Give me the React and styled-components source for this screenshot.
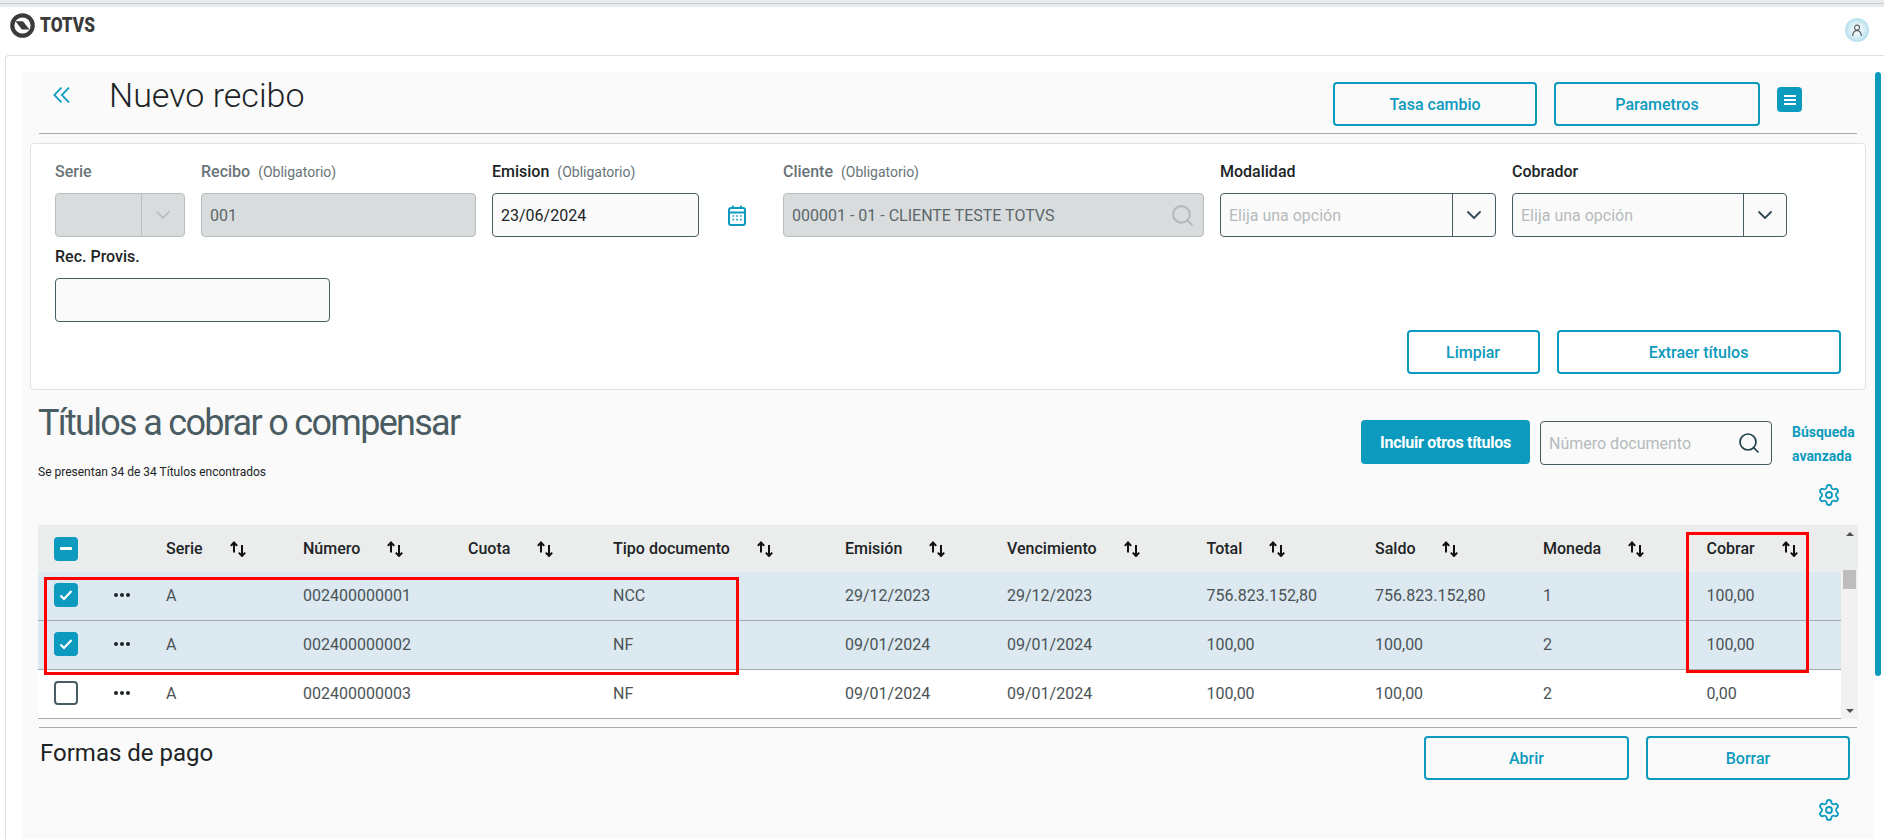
import React from 'react';
import styled, { createGlobalStyle, css } from 'styled-components';
import { ChevronDown, Search, Settings } from 'lucide-react';

const primary = '#0c9abe';
const columns = '76px 52px 137px 165px 145px 232px 162px 199.5px 168.5px 168px 163.5px 134px';

const GlobalStyle = createGlobalStyle`
  html, body {
    margin: 0;
    height: 100%;
    overflow: hidden;
    background: #fff;
  }

  body {
    font-family: Roboto, "Liberation Sans", sans-serif;
    font-size: 16px;
    color: #1d2426;
  }

  * {
    box-sizing: border-box;
  }
`;

const Page = styled.div`
  height: 839px;
  display: flex;
  flex-direction: column;
  overflow: hidden;
`;

const BrowserStrip = styled.div`
  height: 7px;
  flex: none;
  background: #e9ecee;
  padding-top: 3px;

  &::before {
    content: '';
    display: block;
    height: 1px;
    background: #c9ced2;
  }
`;

const TopBar = styled.header`
  height: 48px;
  flex: none;
  display: flex;
  align-items: center;
  justify-content: space-between;
  padding: 0 15px 2px 10px;
`;

const Logo = styled.div`
  display: flex;
  align-items: center;
  gap: 5px;
  margin-bottom: 9px;
  color: #3b3b3b;
`;

const LogoText = styled.span`
  display: inline-block;
  width: 54px;
  margin-top: -2px;
  font-size: 21px;
  line-height: 24px;
  font-weight: 900;
  transform: scaleX(0.82);
  transform-origin: left center;
  white-space: nowrap;
`;

const Avatar = styled.div`
  width: 24px;
  height: 24px;
  border-radius: 50%;
  display: flex;
  align-items: center;
  justify-content: center;
  background: radial-gradient(circle, #eef8fb 25%, #8fd0e2 100%);
`;

const Shell = styled.div`
  flex: 1;
  display: flex;
  margin-left: 5px;
  padding-top: 16px;
  border-top: 1px solid #dfdfdf;
  border-left: 1px solid #dfdfdf;
  border-top-left-radius: 4px;
`;

const Content = styled.main`
  flex: 1;
  min-width: 0;
  margin-left: 16px;
  background: #fafafa;
`;

const PageScroll = styled.div`
  width: 6px;
  height: 604px;
  margin: 0 3.5px 0 0.5px;
  flex: none;
  border-radius: 3px;
  background: ${primary};
`;

const PageHead = styled.div`
  height: 62px;
  margin: 0 17px;
  padding: 10px 0 0 14px;
  display: flex;
  align-items: flex-start;
  border-bottom: 1px solid #a3abae;
`;

const BackLink = styled.a`
  width: 57px;
  margin-top: 5px;
  flex: none;
  color: ${primary};
  line-height: 0;
`;

const PageTitle = styled.h1`
  margin: -9px 0 0 -1px;
  font-size: 34px;
  line-height: 44px;
  font-weight: 300;
  color: #1d2426;
`;

const HeadActions = styled.div`
  margin-left: auto;
  padding-right: 55px;
  display: flex;
  align-items: flex-start;
  gap: 17px;
`;

const OutlineButton = styled.button`
  width: ${({ $width }) => $width}px;
  height: 44px;
  flex: none;
  padding: 0;
  border: 2px solid ${primary};
  border-radius: 4px;
  background: transparent;
  color: ${primary};
  font: 500 16px Roboto, sans-serif;
`;

const MenuButton = styled.button`
  width: 25px;
  height: 25px;
  margin-top: 5px;
  padding: 0;
  display: flex;
  flex-direction: column;
  align-items: center;
  justify-content: center;
  gap: 2px;
  border: 0;
  border-radius: 4px;
  background: ${primary};

  span {
    width: 12px;
    height: 2px;
    background: #fff;
  }
`;

const FormCard = styled.section`
  margin: 9px 8.5px 0 8px;
  padding: 18px 24px 16px;
  height: 247px;
  background: #fff;
  border: 1px solid #e0e2e2;
  border-radius: 4px;
`;

const FieldRow = styled.div`
  display: flex;
  gap: 16px;
  margin-bottom: 10px;
`;

const Field = styled.div`
  width: ${({ $width }) => $width}px;
  flex: none;
`;

const Label = styled.label`
  display: block;
  height: 20px;
  margin-bottom: 11px;
  line-height: 20px;
  font-weight: 500;
  white-space: nowrap;
  color: ${({ $off }) => ($off ? '#687478' : '#1d2426')};

  small {
    margin-left: 8px;
    font-size: 14px;
    font-weight: 400;
    color: #687478;
  }
`;

const controlBox = css`
  height: 44px;
  display: flex;
  align-items: center;
  border-radius: 4px;
  border: 1px solid ${({ $off }) => ($off ? '#b9bfc0' : '#4a5c63')};
  background: ${({ $off }) => ($off ? '#d9dcdd' : '#fafafa')};
`;

const Control = styled.div`
  ${controlBox}
  padding-left: 8px;
  color: ${({ $off }) => ($off ? '#5a676b' : '#1d2426')};
`;

const SelectControl = styled(Control)`
  padding-right: 0;
`;

const LookupControl = styled(Control)`
  justify-content: space-between;
  padding-right: 8px;
`;

const Placeholder = styled.span`
  flex: 1;
  color: #b6babd;
`;

const Caret = styled.span`
  width: 43px;
  height: 100%;
  flex: none;
  display: flex;
  align-items: center;
  justify-content: center;
  border-left: 1px solid ${({ $off }) => ($off ? '#b9bfc0' : '#4a5c63')};
  color: ${({ $off }) => ($off ? '#b4b9ba' : '#2e4a56')};
`;

const CalendarCell = styled.div`
  width: 52px;
  height: 44px;
  margin-top: 31px;
  padding-left: 13px;
  flex: none;
  display: flex;
  align-items: center;
  color: ${primary};
`;

const CardActions = styled.div`
  display: flex;
  justify-content: flex-end;
  gap: 17px;
  margin-top: -2px;
`;

const SectionHead = styled.div`
  height: 135px;
  padding: 0 12px 0 16px;
  display: flex;
  justify-content: space-between;
`;

const SectionTitle = styled.h2`
  margin: 11px 0 0;
  font-size: 36px;
  line-height: 44px;
  font-weight: 400;
  letter-spacing: -1.7px;
  color: #4a5c62;
`;

const SectionNote = styled.p`
  margin: 19px 0 0;
  font-size: 12px;
  line-height: 16px;
  color: #1d2426;
`;

const Tools = styled.div`
  padding-top: 30px;
`;

const ToolRow = styled.div`
  display: flex;
  align-items: flex-start;
`;

const PrimaryButton = styled.button`
  width: 169px;
  height: 44px;
  padding: 0;
  border: 0;
  border-radius: 4px;
  background: ${primary};
  color: #fff;
  font: 700 16px Roboto, sans-serif;
  letter-spacing: -0.25px;
`;

const SearchBox = styled.div`
  width: 232px;
  height: 44px;
  margin: 1px 20px 0 10px;
  padding: 0 10px 0 8px;
  display: flex;
  align-items: center;
  justify-content: space-between;
  border: 1px solid #4a5c63;
  border-radius: 4px;
  color: #23414d;
`;

const AdvancedLink = styled.a`
  width: 70px;
  font-size: 14px;
  line-height: 24px;
  font-weight: 700;
  color: ${primary};
`;

const GearRow = styled.div`
  display: flex;
  justify-content: flex-end;
  padding-right: ${({ $right }) => $right}px;
  margin-top: ${({ $top }) => $top}px;
  color: ${primary};
`;

const TableWrap = styled.div`
  position: relative;
  height: 194px;
  margin: 0 16px;
  display: flex;
`;

const Table = styled.div`
  flex: 1;
  min-width: 0;
  background: #fff;
`;

const HeaderRow = styled.div`
  height: 47px;
  display: grid;
  grid-template-columns: ${columns};
  align-items: center;
  background: #ebecec;
  font-weight: 500;
`;

const Row = styled.div`
  height: 49px;
  padding-bottom: 2px;
  display: grid;
  grid-template-columns: ${columns};
  align-items: center;
  border-bottom: 1px solid #a3abae;
  background: ${({ $selected }) => ($selected ? '#dce9f0' : '#fff')};
  color: #4b5356;
`;

const CheckCell = styled.div`
  padding-left: 16px;
  display: flex;
`;

const Checkbox = styled.span`
  width: 24px;
  height: 24px;
  display: flex;
  align-items: center;
  justify-content: center;
  border-radius: 4px;
  color: #fff;
  background: ${({ $on }) => ($on ? primary : '#fff')};
  border: ${({ $on }) => ($on ? '0' : '2px solid #4a5c63')};
`;

const Dots = styled.span`
  display: flex;
  gap: 2px;

  i {
    width: 4px;
    height: 4px;
    border-radius: 50%;
    background: #1d2426;
  }
`;

const SortHead = styled.div`
  display: flex;
  align-items: center;
  gap: 27px;
  white-space: nowrap;
`;

const ScrollTrack = styled.div`
  width: 17px;
  flex: none;
  display: flex;
  flex-direction: column;
  align-items: center;
  background: #f1f1f1;
`;

const ScrollTop = styled.div`
  width: 100%;
  height: 45px;
  padding-top: 7px;
  display: flex;
  justify-content: center;
  background: #ebecec;
`;

const ScrollThumb = styled.div`
  width: 13px;
  height: 19px;
  background: #bdbdbd;
`;

const ScrollBottom = styled.div`
  margin-top: auto;
  padding-bottom: 6px;
  line-height: 0;
`;

const Arrow = styled.span`
  width: 0;
  height: 0;
  border-left: 4px solid transparent;
  border-right: 4px solid transparent;
  ${({ $down }) => ($down
    ? 'border-top: 4px solid #505050; display: inline-block;'
    : 'border-bottom: 4px solid #505050;')}
`;

const Callout = styled.div`
  position: absolute;
  top: ${({ $top }) => $top}px;
  left: ${({ $left }) => $left}px;
  width: ${({ $width }) => $width}px;
  height: ${({ $height }) => $height}px;
  border: 3px solid #f00;
  pointer-events: none;
`;

const Footer = styled.div`
  margin: 8px 17px 0;
  padding: 8px 7px 0 1px;
  display: flex;
  justify-content: space-between;
  align-items: flex-start;
  border-top: 1px solid #a3abae;
`;

const FooterTitle = styled.h3`
  margin: 3px 0 0;
  font-size: 24px;
  line-height: 28px;
  font-weight: 400;
  color: #1d2426;
`;

const FooterActions = styled.div`
  display: flex;
  gap: 17px;
`;

const TotvsMark = () => (
  <svg width='25' height='25' viewBox='0 0 25 25'>
    <circle cx='12.5' cy='12.5' r='10.2' fill='none' stroke='currentColor' strokeWidth='4.2' />
    <path d='M5.5 8.2h7.4l6.6 8.4h-7.6z' fill='currentColor' />
  </svg>
);

const BackIcon = () => (
  <svg width='17' height='16' viewBox='0 0 17 16' fill='none' stroke='currentColor' strokeWidth='1.8'>
    <path d='M8.5.6 1.4 8l7.1 7.4M16 .6 8.9 8l7.1 7.4' />
  </svg>
);

const SortIcon = () => (
  <svg width='16' height='16' viewBox='0 0 16 16' fill='none' stroke='#111' strokeWidth='2'>
    <path d='M4 11.5V1.5M.8 4.9 4 1.5l3.2 3.4' />
    <path d='M12 4v11M8.8 11.6l3.2 3.4 3.2-3.4' />
  </svg>
);

const CalendarIcon = () => (
  <svg width='18' height='21' viewBox='0 0 18 21' fill='none' stroke='currentColor'>
    <rect x='1' y='3' width='16' height='17' rx='2' strokeWidth='2' />
    <path d='M1 7.5h16' strokeWidth='2' />
    <path d='M5 0.5v3M13 0.5v3' strokeWidth='1.8' />
    <path d='M4.5 11h1.6M8.2 11h1.6M11.9 11h1.6M4.5 14.6h1.6M8.2 14.6h1.6M11.9 14.6h1.6' strokeWidth='1.6' />
  </svg>
);

const UserIcon = () => (
  <svg width='12' height='13' viewBox='0 0 12 13' fill='none' stroke='#5c6468' strokeWidth='1.2'>
    <circle cx='6' cy='3.6' r='2.5' />
    <path d='M1.6 12c.3-3.4 1.8-5.4 4.4-5.4s4.1 2 4.4 5.4' />
  </svg>
);

const headers = [
  'Serie', 'Número', 'Cuota', 'Tipo documento', 'Emisión',
  'Vencimiento', 'Total', 'Saldo', 'Moneda', 'Cobrar',
];

const rows = [
  { selected: true, cells: ['A', '002400000001', '', 'NCC', '29/12/2023', '29/12/2023', '756.823.152,80', '756.823.152,80', '1', '100,00'] },
  { selected: true, cells: ['A', '002400000002', '', 'NF', '09/01/2024', '09/01/2024', '100,00', '100,00', '2', '100,00'] },
  { selected: false, cells: ['A', '002400000003', '', 'NF', '09/01/2024', '09/01/2024', '100,00', '100,00', '2', '0,00'] },
];

const SelectField = ({ label, width }) => (
  <Field $width={width}>
    <Label>{label}</Label>
    <SelectControl>
      <Placeholder>Elija una opción</Placeholder>
      <Caret><ChevronDown size={24} strokeWidth={1.8} /></Caret>
    </SelectControl>
  </Field>
);

export default function App () {
  return (
    <Page>
      <GlobalStyle />
      <BrowserStrip />
      <TopBar>
        <Logo>
          <TotvsMark />
          <LogoText>TOTVS</LogoText>
        </Logo>
        <Avatar><UserIcon /></Avatar>
      </TopBar>
      <Shell>
        <Content>
          <PageHead>
            <BackLink><BackIcon /></BackLink>
            <PageTitle>Nuevo recibo</PageTitle>
            <HeadActions>
              <OutlineButton $width={204}>Tasa cambio</OutlineButton>
              <OutlineButton $width={206}>Parametros</OutlineButton>
              <MenuButton aria-label='Menu'><span /><span /><span /></MenuButton>
            </HeadActions>
          </PageHead>
          <FormCard>
            <FieldRow>
              <Field $width={130}>
                <Label $off>Serie</Label>
                <SelectControl $off>
                  <Placeholder />
                  <Caret $off><ChevronDown size={24} strokeWidth={1.6} /></Caret>
                </SelectControl>
              </Field>
              <Field $width={275}>
                <Label $off>Recibo<small>(Obligatorio)</small></Label>
                <Control $off>001</Control>
              </Field>
              <Field $width={207}>
                <Label>Emision<small>(Obligatorio)</small></Label>
                <Control>23/06/2024</Control>
              </Field>
              <CalendarCell><CalendarIcon /></CalendarCell>
              <Field $width={421}>
                <Label $off>Cliente<small>(Obligatorio)</small></Label>
                <LookupControl $off>
                  000001 - 01 - CLIENTE TESTE TOTVS
                  <Search size={25} strokeWidth={2} color='#b4b9ba' />
                </LookupControl>
              </Field>
              <SelectField label='Modalidad' width={276} />
              <SelectField label='Cobrador' width={275} />
            </FieldRow>
            <FieldRow>
              <Field $width={275}>
                <Label>Rec. Provis.</Label>
                <Control />
              </Field>
            </FieldRow>
            <CardActions>
              <OutlineButton $width={133}>Limpiar</OutlineButton>
              <OutlineButton $width={284}>Extraer títulos</OutlineButton>
            </CardActions>
          </FormCard>
          <SectionHead>
            <div>
              <SectionTitle>Títulos a cobrar o compensar</SectionTitle>
              <SectionNote>Se presentan 34 de 34 Títulos encontrados</SectionNote>
            </div>
            <Tools>
              <ToolRow>
                <PrimaryButton>Incluir otros títulos</PrimaryButton>
                <SearchBox>
                  <Placeholder>Número documento</Placeholder>
                  <Search size={24} strokeWidth={1.7} />
                </SearchBox>
                <AdvancedLink>Búsqueda avanzada</AdvancedLink>
              </ToolRow>
              <GearRow $right={21} $top={15}><Settings size={24} strokeWidth={1.8} /></GearRow>
            </Tools>
          </SectionHead>
          <TableWrap>
            <Table>
              <HeaderRow>
                <CheckCell>
                  <Checkbox $on><svg width='12' height='3'><rect width='12' height='3' rx='1' fill='#fff' /></svg></Checkbox>
                </CheckCell>
                <span />
                {headers.map(name => (
                  <SortHead key={name}>{name}<SortIcon /></SortHead>
                ))}
              </HeaderRow>
              {rows.map(row => (
                <Row key={row.cells[1]} $selected={row.selected}>
                  <CheckCell>
                    <Checkbox $on={row.selected}>
                      {row.selected && (
                        <svg width='14' height='12' viewBox='0 0 14 12' fill='none' stroke='#fff' strokeWidth='2.2'>
                          <path d='M1.5 6.5 5 10l7.5-8' />
                        </svg>
                      )}
                    </Checkbox>
                  </CheckCell>
                  <Dots><i /><i /><i /></Dots>
                  {row.cells.map((cell, i) => <span key={i}>{cell}</span>)}
                </Row>
              ))}
            </Table>
            <ScrollTrack>
              <ScrollTop><Arrow /></ScrollTop>
              <ScrollThumb />
              <ScrollBottom><Arrow $down /></ScrollBottom>
            </ScrollTrack>
            <Callout $top={52} $left={6} $width={695} $height={98} />
            <Callout $top={7} $left={1648} $width={123} $height={141} />
          </TableWrap>
          <Footer>
            <FooterTitle>Formas de pago</FooterTitle>
            <FooterActions>
              <OutlineButton $width={205}>Abrir</OutlineButton>
              <OutlineButton $width={204}>Borrar</OutlineButton>
            </FooterActions>
          </Footer>
          <GearRow $right={33} $top={18}><Settings size={24} strokeWidth={1.8} /></GearRow>
        </Content>
        <PageScroll />
      </Shell>
    </Page>
  );
}
